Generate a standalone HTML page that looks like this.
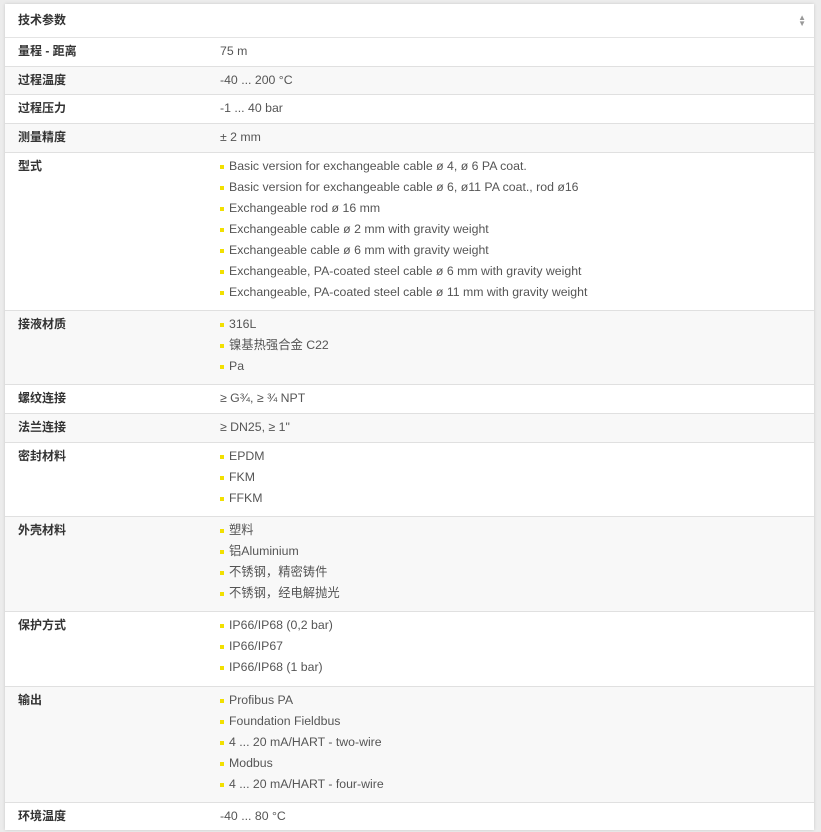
<!DOCTYPE html>
<html><head><meta charset="utf-8"><style>
body{margin:0;background:#ececec;width:821px;height:832px;overflow:hidden;font-family:"Liberation Sans","Noto Sans CJK SC",sans-serif;font-size:12.3px;color:#555}
.p{position:absolute;left:5px;top:4px;width:809px;background:#fff;box-shadow:0 0 3px rgba(0,0,0,.15)}
.h{height:33px;border-bottom:1px solid #e4e4e4;position:relative}
.h b{position:absolute;left:13px;top:7px;color:#333;font-size:12px}
.h i{position:absolute;right:8px;top:11px;font-style:normal;color:#999;font-size:8px;line-height:6px}
.r{display:flex;border-bottom:1px solid #e0e0e0}
.r:nth-child(even){background:#f8f8f8}
.l{width:215px;flex:none;padding-left:13px;font-weight:bold;color:#333;font-size:12px;padding-top:6px;line-height:14px;box-sizing:border-box}
.v{padding-top:6px;line-height:14px}
ul{margin:0;padding:0;list-style:none}
li{line-height:21px;position:relative;padding-left:9px}
li:before{content:"";position:absolute;left:0;top:9px;width:4px;height:4px;background:#f2e000}
</style></head><body><div class="p">
<div class="h"><b>技术参数</b><i>▲<br>▼</i></div>
<div>
<div class="r" style="height:28px"><div class="l">量程 - 距离</div><div class="v">75 m</div></div>
<div class="r" style="height:27px"><div class="l">过程温度</div><div class="v">-40 ... 200 °C</div></div>
<div class="r" style="height:28px"><div class="l">过程压力</div><div class="v">-1 ... 40 bar</div></div>
<div class="r" style="height:28px"><div class="l">测量精度</div><div class="v">± 2 mm</div></div>
<div class="r" style="height:157px"><div class="l">型式</div><div class="v" style="padding-top:3px"><ul><li>Basic version for exchangeable cable ø 4, ø 6 PA coat.</li><li>Basic version for exchangeable cable ø 6, ø11 PA coat., rod ø16</li><li>Exchangeable rod ø 16 mm</li><li>Exchangeable cable ø 2 mm with gravity weight</li><li>Exchangeable cable ø 6 mm with gravity weight</li><li>Exchangeable, PA-coated steel cable ø 6 mm with gravity weight</li><li>Exchangeable, PA-coated steel cable ø 11 mm with gravity weight</li></ul></div></div>
<div class="r" style="height:73px"><div class="l">接液材质</div><div class="v" style="padding-top:3px"><ul><li>316L</li><li>镍基热强合金 C22</li><li>Pa</li></ul></div></div>
<div class="r" style="height:28px"><div class="l">螺纹连接</div><div class="v">≥ G¾, ≥ ¾ NPT</div></div>
<div class="r" style="height:28px"><div class="l">法兰连接</div><div class="v">≥ DN25, ≥ 1"</div></div>
<div class="r" style="height:73px"><div class="l">密封材料</div><div class="v" style="padding-top:3px"><ul><li>EPDM</li><li>FKM</li><li>FFKM</li></ul></div></div>
<div class="r" style="height:94px"><div class="l">外壳材料</div><div class="v" style="padding-top:3px"><ul><li>塑料</li><li>铝Aluminium</li><li>不锈钢，精密铸件</li><li>不锈钢，经电解抛光</li></ul></div></div>
<div class="r" style="height:74px"><div class="l">保护方式</div><div class="v" style="padding-top:3px"><ul><li>IP66/IP68 (0,2 bar)</li><li>IP66/IP67</li><li>IP66/IP68 (1 bar)</li></ul></div></div>
<div class="r" style="height:115px"><div class="l">输出</div><div class="v" style="padding-top:3px"><ul><li>Profibus PA</li><li>Foundation Fieldbus</li><li>4 ... 20 mA/HART - two-wire</li><li>Modbus</li><li>4 ... 20 mA/HART - four-wire</li></ul></div></div>
<div class="r" style="height:27px;border-bottom:0"><div class="l">环境温度</div><div class="v">-40 ... 80 °C</div></div>
</div></div></body></html>
